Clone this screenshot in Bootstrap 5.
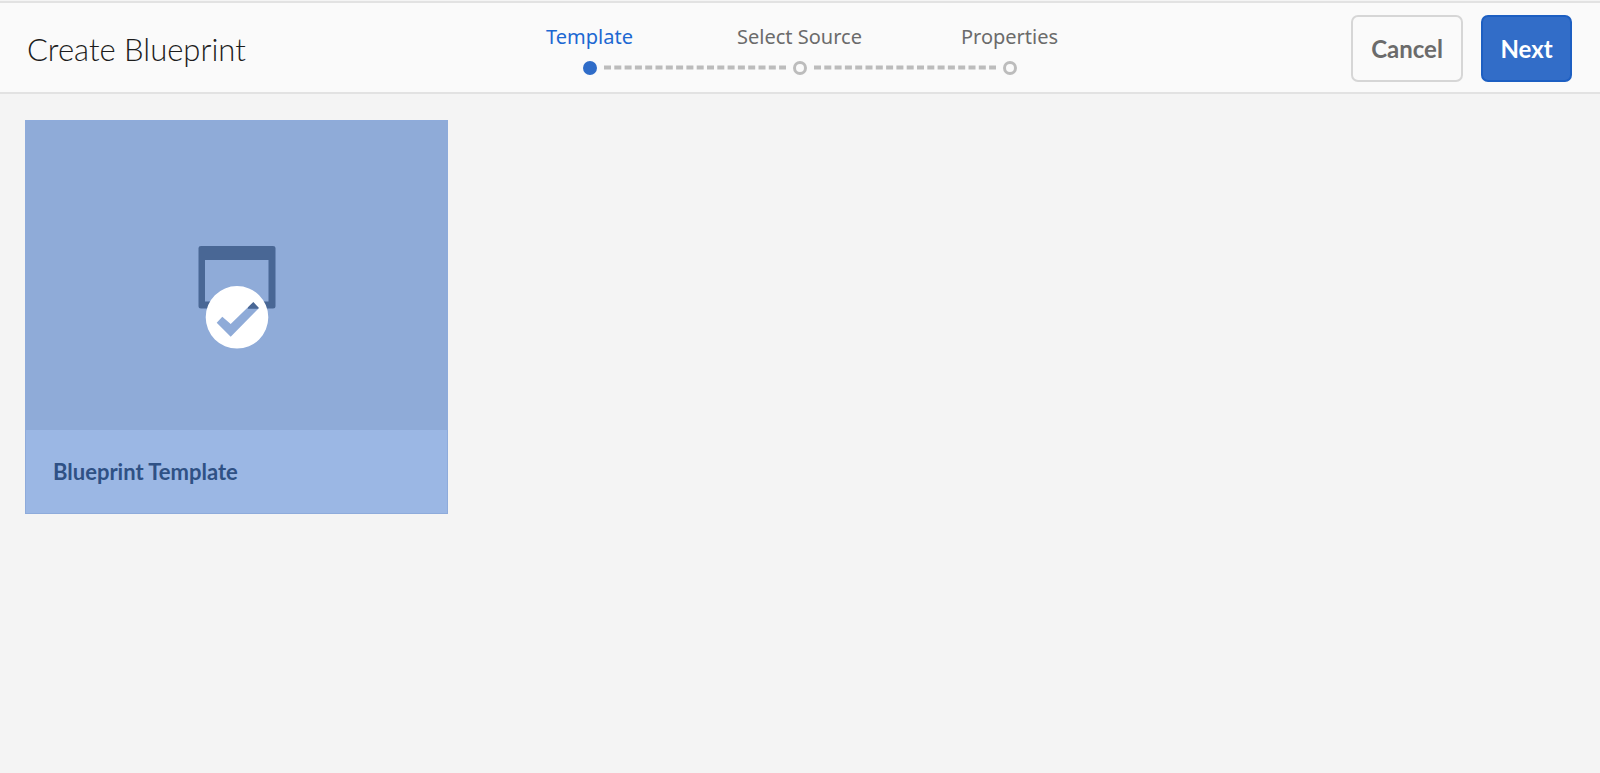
<!DOCTYPE html>
<html lang="en">
<head>
<meta charset="utf-8">
<meta name="viewport" content="width=device-width, initial-scale=1">
<title>Create Blueprint</title>
<link href="https://cdn.jsdelivr.net/npm/bootstrap@5.3.0/dist/css/bootstrap.min.css" rel="stylesheet">
<style>
body { background: #f4f4f4; font-family: Lato, "Open Sans", sans-serif; min-height: 100vh; }
.shell-header { margin-top: 1px; padding: 12px 28px 10px 27px; background: #fafafa; border-top: 2px solid #e2e2e2; border-bottom: 2px solid #e2e2e2; }
.shell-side { flex: 1 1 0; }
.shell-title { font-size: 31px; font-weight: 300; line-height: 40px; color: #1c1c1c; }
.step-item { width: 210px; font-family: "Noto Sans", sans-serif; font-size: 20px; line-height: 28px; }
.step-item a { color: #6b6b6b; }
.step-item.active a { color: #1c68d2; }
.step-track { padding-top: 10px; }
.step-dot { width: 14px; height: 14px; border: 3px solid #bcbcbc; border-radius: 50%; }
.active .step-dot { background: #2f6cc8; border-color: #2f6cc8; }
.step-line { width: 182px; height: 14px; margin: 0 7px; }
.btn-shell { height: 67px; padding: 0; border-radius: 7px; border-width: 2px; font-size: 24px; font-weight: 700; line-height: 30px; }
.btn-cancel { width: 112px; }
.btn-next { width: 91px; }
.btn-cancel, .btn-cancel:hover { color: #6b6b6b; border-color: #d6d6d6; }
.btn-next, .btn-next:hover { color: #fff; background: #326dc8; border-color: #1d5fc2; }
.shell-actions { gap: 18px; }
.shell-main { padding: 26px 25px; }
.template-card { width: 423px; background: #9bb7e4; border: 1px solid #8eabdb; border-radius: 0; }
.template-preview { height: 309px; padding-top: 124px; background: #8fabd8; }
.template-name { padding: 27px 27px 26px; font-size: 22px; font-weight: 700; line-height: 30px; color: #2f5185; }
</style>
</head>
<body>
<header class="shell-header d-flex align-items-center">
  <div class="shell-side">
    <h1 class="shell-title mb-0 text-nowrap">Create Blueprint</h1>
  </div>
  <nav aria-label="Wizard steps">
    <ol class="list-unstyled d-flex mb-0 text-center text-nowrap">
      <li class="step-item active"><a class="text-decoration-none" href="#" aria-current="step">Template</a></li>
      <li class="step-item"><a class="text-decoration-none" href="#">Select Source</a></li>
      <li class="step-item"><a class="text-decoration-none" href="#">Properties</a></li>
    </ol>
    <div class="step-track d-flex justify-content-center" aria-hidden="true">
      <span class="active d-flex"><span class="step-dot"></span></span>
      <svg class="step-line" viewBox="0 0 182 14"><path d="M0 6.500H182" stroke="#bcbcbc" stroke-width="4" stroke-dasharray="7 3.300"/></svg>
      <span class="step-dot"></span>
      <svg class="step-line" viewBox="0 0 182 14"><path d="M0 6.500H182" stroke="#bcbcbc" stroke-width="4" stroke-dasharray="7 3.300"/></svg>
      <span class="step-dot"></span>
    </div>
  </nav>
  <div class="shell-side shell-actions d-flex justify-content-end">
    <button type="button" class="btn btn-shell btn-cancel">Cancel</button>
    <button type="button" class="btn btn-shell btn-next">Next</button>
  </div>
</header>
<main class="shell-main">
  <article class="card template-card">
    <div class="template-preview text-center">
      <svg width="78" height="106" viewBox="0 0 78 106" role="img" aria-label="Selected template">
        <path fill="#496795" fill-rule="evenodd" d="M3 1H75Q77.500 1 77.500 3V61Q77.500 63.500 75 63.500H3Q.5 63.500 .5 61V3Q.5 1 3 1ZM7 15V56.500H70.500V15Z"/>
        <path fill="#8fabd8" d="M19 61L31 55H50V74L33 91L18 79Z"/>
        <path fill="#496795" d="M49.500 63.500L55.300 57L61 63.500Z"/>
        <path fill="#fff" fill-rule="evenodd" d="M39 41A31.300 31.300 0 0 1 39 103.600A31.300 31.300 0 0 1 39 41ZM18.700 77.700L32.700 91.700L61 63L55.300 57L32.700 79L24.300 71.700Z"/>
      </svg>
    </div>
    <h2 class="template-name mb-0">Blueprint Template</h2>
  </article>
</main>
<script src="https://cdn.jsdelivr.net/npm/bootstrap@5.3.0/dist/js/bootstrap.bundle.min.js"></script>
</body>
</html>
